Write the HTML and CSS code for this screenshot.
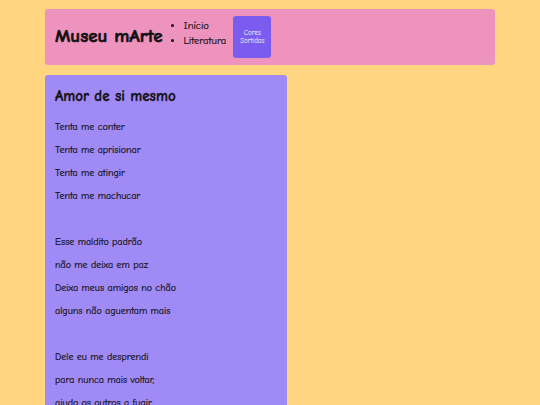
FILE: index.html
```html
<!DOCTYPE html>
<html lang="pt">
<head>
<meta charset="utf-8">
<title>Museu mArte</title>
<link rel="stylesheet" href="styles.css">
</head>
<body>
<div class="page">
  <header class="topbar">
    <h1 class="brand">Museu mArte</h1>
    <ul class="nav">
      <li>Início</li>
      <li>Literatura</li>
    </ul>
    <button class="colors">Cores Sortidas</button>
  </header>
  <main class="poem">
    <h2 class="poem-title">Amor de si mesmo</h2>
    <p>Tenta me conter</p>
    <p>Tenta me aprisionar</p>
    <p>Tenta me atingir</p>
    <p>Tenta me machucar</p>
    <p class="blank">&nbsp;</p>
    <p>Esse maldito padrão</p>
    <p>não me deixa em paz</p>
    <p>Deixa meus amigos no chão</p>
    <p>alguns não aguentam mais</p>
    <p class="blank">&nbsp;</p>
    <p>Dele eu me desprendi</p>
    <p>para nunca mais voltar,</p>
    <p>ajudo os outros a fugir</p>
    <p>para poderem se libertar</p>
  </main>
</div>
</body>
</html>
```

FILE: styles.css
```css
html, body {
  margin: 0;
  padding: 0;
  background: #ffd57f;
}
body {
  font-family: "Comic Sans MS", "Comic Neue", cursive;
  color: #111;
}
.page {
  width: 450px;
  margin: 0 auto;
  padding-top: 9px;
}
.topbar {
  display: flex;
  align-items: center;
  height: 56px;
  box-sizing: border-box;
  padding: 7px 10px;
  background: #ee92be;
  border-radius: 3px;
}
.brand {
  margin: 0 5px 3px 0;
  font-size: 19px;
  font-weight: bold;
  -webkit-text-stroke: 0.6px #111;
}
.nav {
  align-self: flex-start;
  margin: 3px 7px 0 0;
  padding: 0 0 0 16px;
  list-style: disc;
  font-size: 10.5px;
  line-height: 15px;
  -webkit-text-stroke: 0.2px #111;
}
.colors {
  width: 38px;
  height: 42px;
  padding: 0;
  border: none;
  border-radius: 3px;
  background: #7a5cf0;
  color: #fff;
  font-family: inherit;
  font-size: 7px;
  line-height: 8px;
}
.poem {
  width: 242px;
  box-sizing: border-box;
  margin-top: 10px;
  padding: 11px 10px 10px;
  background: #a08af5;
  border-radius: 3px;
}
.poem-title {
  margin: 0 0 15px;
  font-size: 15px;
  line-height: 20px;
  -webkit-text-stroke: 0.3px #111;
}
.poem p {
  margin: 10px 0;
  font-size: 10px;
  line-height: 13px;
  -webkit-text-stroke: 0.2px #111;
}
```
